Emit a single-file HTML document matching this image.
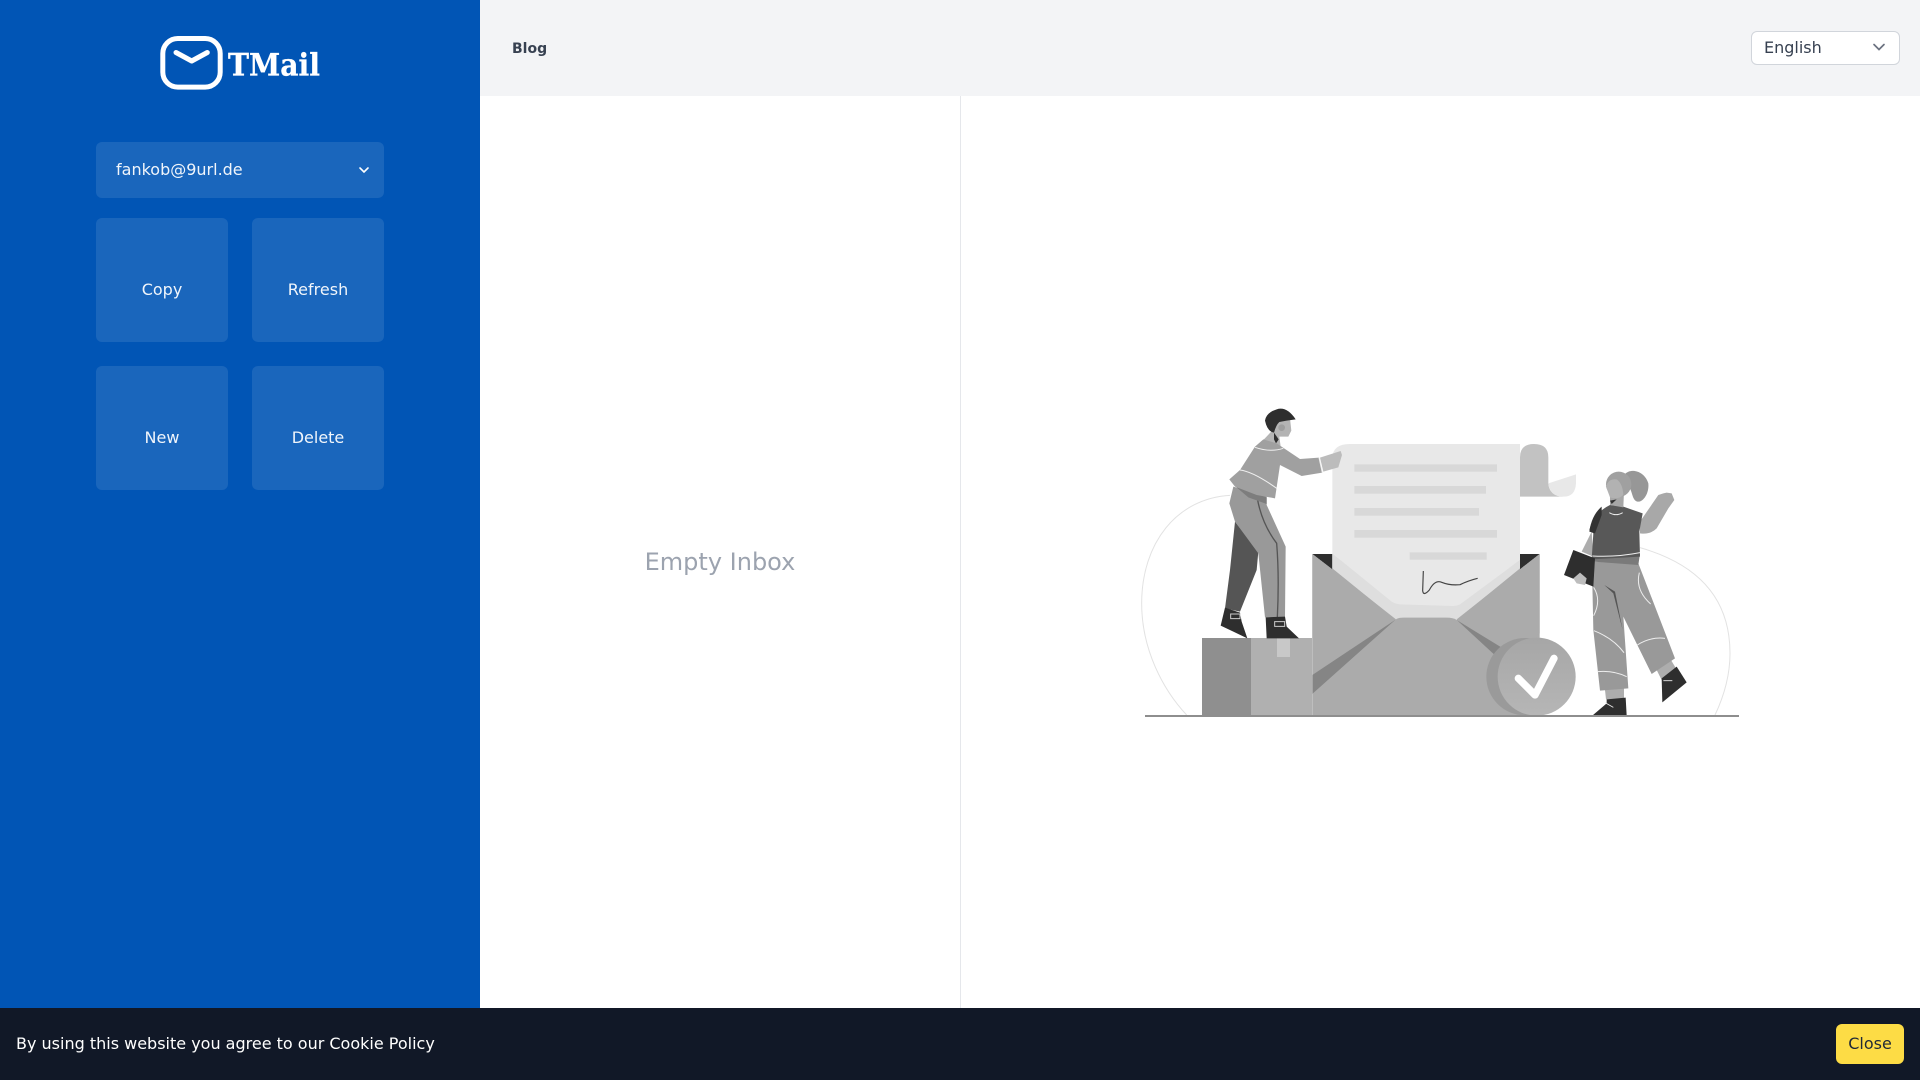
<!DOCTYPE html>
<html lang="en">
<head>
<meta charset="utf-8">
<title>TMail</title>
<style>
*{box-sizing:border-box;margin:0;padding:0}
html,body{width:1920px;height:1080px;overflow:hidden;background:#fff;font-family:"DejaVu Sans",sans-serif;font-size:16px;line-height:24px}
.a{position:absolute}
#side{left:0;top:0;width:480px;height:1080px;background:#0155b5}
#head{left:480px;top:0;width:1440px;height:96px;background:#f3f4f6}
#div{left:960px;top:96px;width:1px;height:912px;background:#e5e7eb}
.btn{background:#1a66bc;border-radius:6px;width:132px;height:124px;color:#f0f5fb;text-align:center;padding-top:60px}
#mail{left:96px;top:142px;width:288px;height:56px;background:#1a66bc;border-radius:6px;color:#f0f5fb;padding:16px 0 0 20px}
#blog{left:512px;top:37px;font-size:14px;line-height:24px;font-weight:bold;color:#374151}
#lang{left:1751px;top:31px;width:149px;height:34px;background:#fff;border:1px solid #d1d5db;border-radius:6px;color:#374151;padding:4px 0 0 12px}
#empty{left:480px;width:480px;top:544px;text-align:center;font-size:24px;line-height:36px;color:#9ca3af}
#foot{left:0;top:1008px;width:1920px;height:72px;background:#111827;color:#fff;padding:24px 0 0 16px}
#close{left:1836px;top:1024px;width:68px;height:40px;background:#fddc45;border-radius:6px;color:#1f2937;text-align:center;padding-top:8px}
svg{position:absolute;left:0;top:0}
</style>
</head>
<body>
<div class="a" id="side"></div>
<div class="a" id="head"></div>
<div class="a" id="div"></div>
<div class="a" id="mail">fankob@9url.de</div>
<div class="a btn" style="left:96px;top:218px">Copy</div>
<div class="a btn" style="left:252px;top:218px">Refresh</div>
<div class="a btn" style="left:96px;top:366px">New</div>
<div class="a btn" style="left:252px;top:366px">Delete</div>
<div class="a" id="blog">Blog</div>
<div class="a" id="lang">English</div>
<div class="a" id="empty">Empty Inbox</div>

<svg width="1920" height="1080" viewBox="0 0 1920 1080">
<defs>
<linearGradient id="g" x1="0" y1="0" x2="0" y2="1"><stop offset="0" stop-color="#a6a6a6"/><stop offset="1" stop-color="#b6b6b6"/></linearGradient>
</defs>
<!-- logo -->
<rect x="162.8" y="38.5" width="57.4" height="48.6" rx="15" fill="none" stroke="#fff" stroke-width="5"/>
<path d="M176 52.5 L191.7 61 L207.3 52.5" fill="none" stroke="#fff" stroke-width="5" stroke-linecap="round" stroke-linejoin="round"/>
<text x="228" y="75.5" font-family="'DejaVu Serif',serif" font-weight="bold" font-size="31" fill="#fff" stroke="#fff" stroke-width=".3" textLength="92" lengthAdjust="spacingAndGlyphs">TMail</text>
<!-- chevrons -->
<path d="M360 168 L364 172 L368 168" fill="none" stroke="#fff" stroke-width="1.6" stroke-linecap="round"/>
<path d="M1874 44.5 L1879 49.5 L1884 44.5" fill="none" stroke="#6b7280" stroke-width="1.7" stroke-linecap="round"/>

<!-- box -->
<g>
<rect x="1202" y="638" width="49" height="78" fill="#8f8f8f"/>
<rect x="1251" y="638" width="61" height="78" fill="#b0b0b0"/>
<rect x="1277" y="638" width="13" height="19" fill="#c8c8c8"/>
</g>

<!-- envelope + paper -->
<g transform="translate(1300 420) scale(.33333)">
<path d="M37 402H97V448ZM719 402H660V448Z" fill="#2e2e2e"/>
<path d="M660 228V112Q660 72 702 72Q745 72 745 112V190Q748 228 790 230H660Z" fill="#c2c2c2"/>
<path d="M745 190L828 163V190Q826 230 790 230Q750 230 745 190Z" fill="#e8e8e8"/>
<path d="M37 402L97 448V402L280 548H470L660 420V448L719 402V888H37Z" fill="#ababab"/>
<path d="M97 400L280 545L470 555L660 420V445L470 600H288L97 445Z" fill="#dedede"/>
<path d="M97 400V115Q97 72 150 72H660V420L480 553Q470 558 460 558L300 553Q285 552 275 545Z" fill="#e8e8e8"/>
<path d="M37 402L97 448L288 598L37 765ZM719 402L660 448L470 598L620 700L719 640Z" fill="#ababab"/>
<path d="M37 765L288 598L37 822Z" fill="#858585"/>
<path d="M470 600L625 695L600 720Z" fill="#858585"/>
<path d="M37 888V822L288 598Q295 593 310 593H440Q460 593 470 600L600 720L620 888Z" fill="#ababab"/>
<g fill="#d8d8d8">
<rect x="163" y="133" width="428" height="22"/>
<rect x="163" y="198" width="395" height="23"/>
<rect x="163" y="264" width="374" height="23"/>
<rect x="163" y="330" width="428" height="23"/>
<rect x="329" y="397" width="231" height="22"/>
</g>
<path d="M370 453L368 512Q370 530 388 510Q405 478 425 487Q450 497 480 494Q505 482 533 475" fill="none" stroke="#444" stroke-width="3.5"/>
<circle cx="675" cy="770" r="116" fill="#9a9a9a"/>
<circle cx="710" cy="770" r="117" fill="url(#g)"/>
<path d="M655 775L705 825L762 715" fill="none" stroke="#fff" stroke-width="22" stroke-linecap="round" stroke-linejoin="round"/>
</g>

<!-- man -->
<g transform="translate(1120 390) scale(.33333)">
<path d="M330 316C170 325 65 460 65 640C65 780 130 900 200 975" fill="none" stroke="#e2e2e2" stroke-width="3"/>
<path d="M345 395L415 485L410 540L360 665L315 655L330 540Z" fill="#555"/>
<path d="M315 653L360 668L365 695L382 745L340 725L302 707Z" fill="#2e2e2e"/>
<path d="M340 290L328 340L345 395L415 490L435 682H495L497 470L440 345V320Z" fill="#999"/>
<path d="M412 325Q425 400 470 460Q478 560 472 682" fill="none" stroke="#555" stroke-width="4"/>
<path d="M437 682L495 680L500 710L537 745H440Z" fill="#2e2e2e"/>
<path d="M332 672h28v14h-28zM464 695h30v14h-30z" fill="none" stroke="#ccc" stroke-width="3"/>
<path d="M345 288L440 322V342L385 322Z" fill="#7d7d7d"/>
<path d="M470 85L510 85L514 122L505 140L478 140L482 170L430 150L460 118Z" fill="#b4b4b4"/>
<path d="M462 128L476 148L468 160L462 148Z" fill="#2e2e2e"/>
<circle cx="485" cy="113" r="10" fill="#9f9f9f"/>
<path d="M435 92Q438 68 470 58Q500 48 527 88L500 92L478 96Q468 105 462 128Q442 125 435 92Z" fill="#2e2e2e"/>
<path d="M405 170L430 148L470 160L540 207L597 203L607 248L545 258L480 225L465 325L410 315L345 290L328 268L360 240Z" fill="#a0a0a0"/>
<path d="M405 172Q450 188 490 175M360 240Q400 245 470 295M597 203L607 248" fill="none" stroke="#f0f0f0" stroke-width="3"/>
<path d="M600 203L662 183L666 195L655 232L610 245Z" fill="#bcbcbc"/>
</g>

<!-- woman -->
<g transform="translate(1560 450) scale(.33333)">
<path d="M240 293Q510 370 510 610Q510 700 465 795" fill="none" stroke="#e2e2e2" stroke-width="3"/>
<path d="M135 720L192 712V748H138ZM290 660L330 625L348 655L305 690Z" fill="#adadad"/>
<path d="M140 748L197 743L200 797H97L140 760Z" fill="#2e2e2e"/>
<path d="M305 685L350 650L380 697L307 757Z" fill="#2e2e2e"/>
<path d="M135 758L160 772M310 692H337" stroke="#eee" stroke-width="2.5" fill="none"/>
<path d="M97 335L235 340L345 625L275 672L190 500L205 715L120 722L100 540L97 400Z" fill="#999"/>
<path d="M133 405L165 425L188 540L160 430Z" fill="#555"/>
<path d="M101 412Q125 450 101 497M238 368Q225 420 272 462M102 542Q160 565 192 608M112 665Q160 660 200 680M232 585Q270 560 315 565" fill="none" stroke="#eee" stroke-width="3"/>
<path d="M97 320L240 310L235 345L100 335Z" fill="#7a7a7a"/>
<path d="M95 245L65 305L100 320Z" fill="#adadad"/>
<path d="M240 215L295 135L310 130L320 128L335 130L343 150L325 175L290 235Q270 255 240 250Z" fill="#a8a8a8"/>
<path d="M88 240Q100 190 150 165L190 170L248 190L238 245L240 320L95 328L100 250Z" fill="#585858"/>
<path d="M125 170Q95 195 88 245L105 250L125 195Z" fill="#333"/>
<path d="M148 188Q168 200 188 188M97 318Q170 322 240 308" fill="none" stroke="#eee" stroke-width="3"/>
<path d="M195 72C215 52 255 65 265 100C268 130 250 155 235 155C220 155 218 135 212 120Z" fill="#979797"/>
<path d="M150 135L192 125L190 172L150 165Z" fill="#a6a6a6"/>
<path d="M150 152L170 148L155 162Z" fill="#333"/>
<circle cx="176" cy="103" r="38" fill="#a0a0a0"/>
<path d="M138 110Q145 85 170 88Q188 100 190 135Q175 150 150 142Z" fill="#b2b2b2"/>
<path d="M40 300L105 325L100 410L12 375Z" fill="#2e2e2e"/>
<path d="M40 385L60 368L80 385L75 405L50 400Z" fill="#bdbdbd"/>
</g>
<rect x="1145" y="715" width="594" height="2" fill="#8e8e8e"/>
</svg>

<div class="a" id="foot">By using this website you agree to our Cookie Policy</div>
<div class="a" id="close">Close</div>
</body>
</html>
